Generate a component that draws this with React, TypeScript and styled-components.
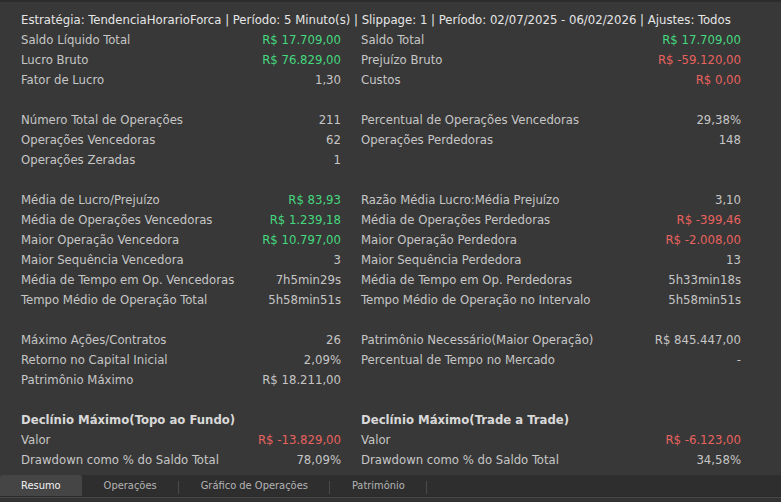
import React from "react";
import styled, { createGlobalStyle } from "styled-components";

const GlobalStyle = createGlobalStyle`
  html, body { margin: 0; padding: 0; background: #383838; }
  body {
    font-family: "DejaVu Sans Condensed", "DejaVu Sans", sans-serif;
    font-size: 13px;
    color: #c6c6c6;
  }
`;

const Window = styled.div`
  width: 781px;
  height: 502px;
  display: flex;
  flex-direction: column;
  background: #383838;
  border-top: 2px solid #2c2c2c;
  box-sizing: border-box;
  overflow: hidden;
`;

const Content = styled.div`
  flex: 1;
  padding: 8px 0 0 21px;
`;

const Header = styled.div`
  height: 19px;
  line-height: 19px;
  color: #e6e6e6;
  white-space: nowrap;
`;

const Section = styled.div`
  display: grid;
  grid-template-columns: 320px 380px;
  column-gap: 20px;
  & + & {
    margin-top: 20px;
  }
`;

const Row = styled.div`
  height: 20px;
  display: flex;
  align-items: center;
  justify-content: space-between;
  white-space: nowrap;
`;

const Label = styled.span<{ $bold?: boolean }>`
  color: ${(p) => (p.$bold ? "#d8d8d8" : "#c6c6c6")};
  font-weight: ${(p) => (p.$bold ? 700 : 400)};
`;

type Tone = "pos" | "neg" | "plain";

const Value = styled.span<{ $tone: Tone }>`
  color: ${(p) =>
    p.$tone === "pos" ? "#45d97f" : p.$tone === "neg" ? "#e8625f" : "#c6c6c6"};
`;

const TabBar = styled.div`
  height: 21px;
  background: #2e2e2e;
  display: flex;
  align-items: stretch;
  border-bottom: 1px solid #2a2a2a;
`;

const Tab = styled.div<{ $active?: boolean }>`
  position: relative;
  padding: 0 ${(p) => (p.$active ? "21px" : "22px")};
  display: flex;
  align-items: center;
  color: ${(p) => (p.$active ? "#f2f2f2" : "#b4b4b4")};
  background: ${(p) => (p.$active ? "#454545" : "transparent")};
  border-radius: ${(p) => (p.$active ? "2px 2px 0 0" : "0")};
  font-size: 11px;
  white-space: nowrap;
  &::after {
    content: "";
    display: ${(p) => (p.$active ? "none" : "block")};
    position: absolute;
    right: 0;
    top: 6px;
    bottom: 2px;
    width: 1px;
    background: #4a4a4a;
  }
`;

const BottomEdge = styled.div`
  height: 1px;
  background: #484848;
`;

const BottomFill = styled.div`
  height: 4px;
  background: #323232;
`;

type Cell = { label: string; value?: string; tone?: Tone; bold?: boolean } | null;

const sections: [Cell, Cell][][] = [
  [
    [
      { label: "Saldo Líquido Total", value: "R$ 17.709,00", tone: "pos" },
      { label: "Saldo Total", value: "R$ 17.709,00", tone: "pos" },
    ],
    [
      { label: "Lucro Bruto", value: "R$ 76.829,00", tone: "pos" },
      { label: "Prejuízo Bruto", value: "R$ -59.120,00", tone: "neg" },
    ],
    [
      { label: "Fator de Lucro", value: "1,30" },
      { label: "Custos", value: "R$ 0,00", tone: "neg" },
    ],
  ],
  [
    [
      { label: "Número Total de Operações", value: "211" },
      { label: "Percentual de Operações Vencedoras", value: "29,38%" },
    ],
    [
      { label: "Operações Vencedoras", value: "62" },
      { label: "Operações Perdedoras", value: "148" },
    ],
    [{ label: "Operações Zeradas", value: "1" }, null],
  ],
  [
    [
      { label: "Média de Lucro/Prejuízo", value: "R$ 83,93", tone: "pos" },
      { label: "Razão Média Lucro:Média Prejuízo", value: "3,10" },
    ],
    [
      { label: "Média de Operações Vencedoras", value: "R$ 1.239,18", tone: "pos" },
      { label: "Média de Operações Perdedoras", value: "R$ -399,46", tone: "neg" },
    ],
    [
      { label: "Maior Operação Vencedora", value: "R$ 10.797,00", tone: "pos" },
      { label: "Maior Operação Perdedora", value: "R$ -2.008,00", tone: "neg" },
    ],
    [
      { label: "Maior Sequência Vencedora", value: "3" },
      { label: "Maior Sequência Perdedora", value: "13" },
    ],
    [
      { label: "Média de Tempo em Op. Vencedoras", value: "7h5min29s" },
      { label: "Média de Tempo em Op. Perdedoras", value: "5h33min18s" },
    ],
    [
      { label: "Tempo Médio de Operação Total", value: "5h58min51s" },
      { label: "Tempo Médio de Operação no Intervalo", value: "5h58min51s" },
    ],
  ],
  [
    [
      { label: "Máximo Ações/Contratos", value: "26" },
      { label: "Patrimônio Necessário(Maior Operação)", value: "R$ 845.447,00" },
    ],
    [
      { label: "Retorno no Capital Inicial", value: "2,09%" },
      { label: "Percentual de Tempo no Mercado", value: "-" },
    ],
    [{ label: "Patrimônio Máximo", value: "R$ 18.211,00" }, null],
  ],
  [
    [
      { label: "Declínio Máximo(Topo ao Fundo)", bold: true },
      { label: "Declínio Máximo(Trade a Trade)", bold: true },
    ],
    [
      { label: "Valor", value: "R$ -13.829,00", tone: "neg" },
      { label: "Valor", value: "R$ -6.123,00", tone: "neg" },
    ],
    [
      { label: "Drawdown como % do Saldo Total", value: "78,09%" },
      { label: "Drawdown como % do Saldo Total", value: "34,58%" },
    ],
  ],
];

const tabs = ["Resumo", "Operações", "Gráfico de Operações", "Patrimônio"];

function StatCell({ cell }: { cell: Cell }) {
  if (!cell) return <Row />;
  return (
    <Row>
      <Label $bold={cell.bold}>{cell.label}</Label>
      {cell.value !== undefined && <Value $tone={cell.tone ?? "plain"}>{cell.value}</Value>}
    </Row>
  );
}

export default function App() {
  return (
    <Window>
      <GlobalStyle />
      <Content>
        <Header>
          Estratégia: TendenciaHorarioForca | Período: 5 Minuto(s) | Slippage: 1 | Período:
          02/07/2025 - 06/02/2026 | Ajustes: Todos
        </Header>
        {sections.map((rows, si) => (
          <Section key={si}>
            {rows.map(([l, r], ri) => (
              <React.Fragment key={ri}>
                <StatCell cell={l} />
                <StatCell cell={r} />
              </React.Fragment>
            ))}
          </Section>
        ))}
      </Content>
      <TabBar>
        {tabs.map((t, i) => (
          <Tab key={t} $active={i === 0}>
            {t}
          </Tab>
        ))}
      </TabBar>
      <BottomEdge />
      <BottomFill />
    </Window>
  );
}
